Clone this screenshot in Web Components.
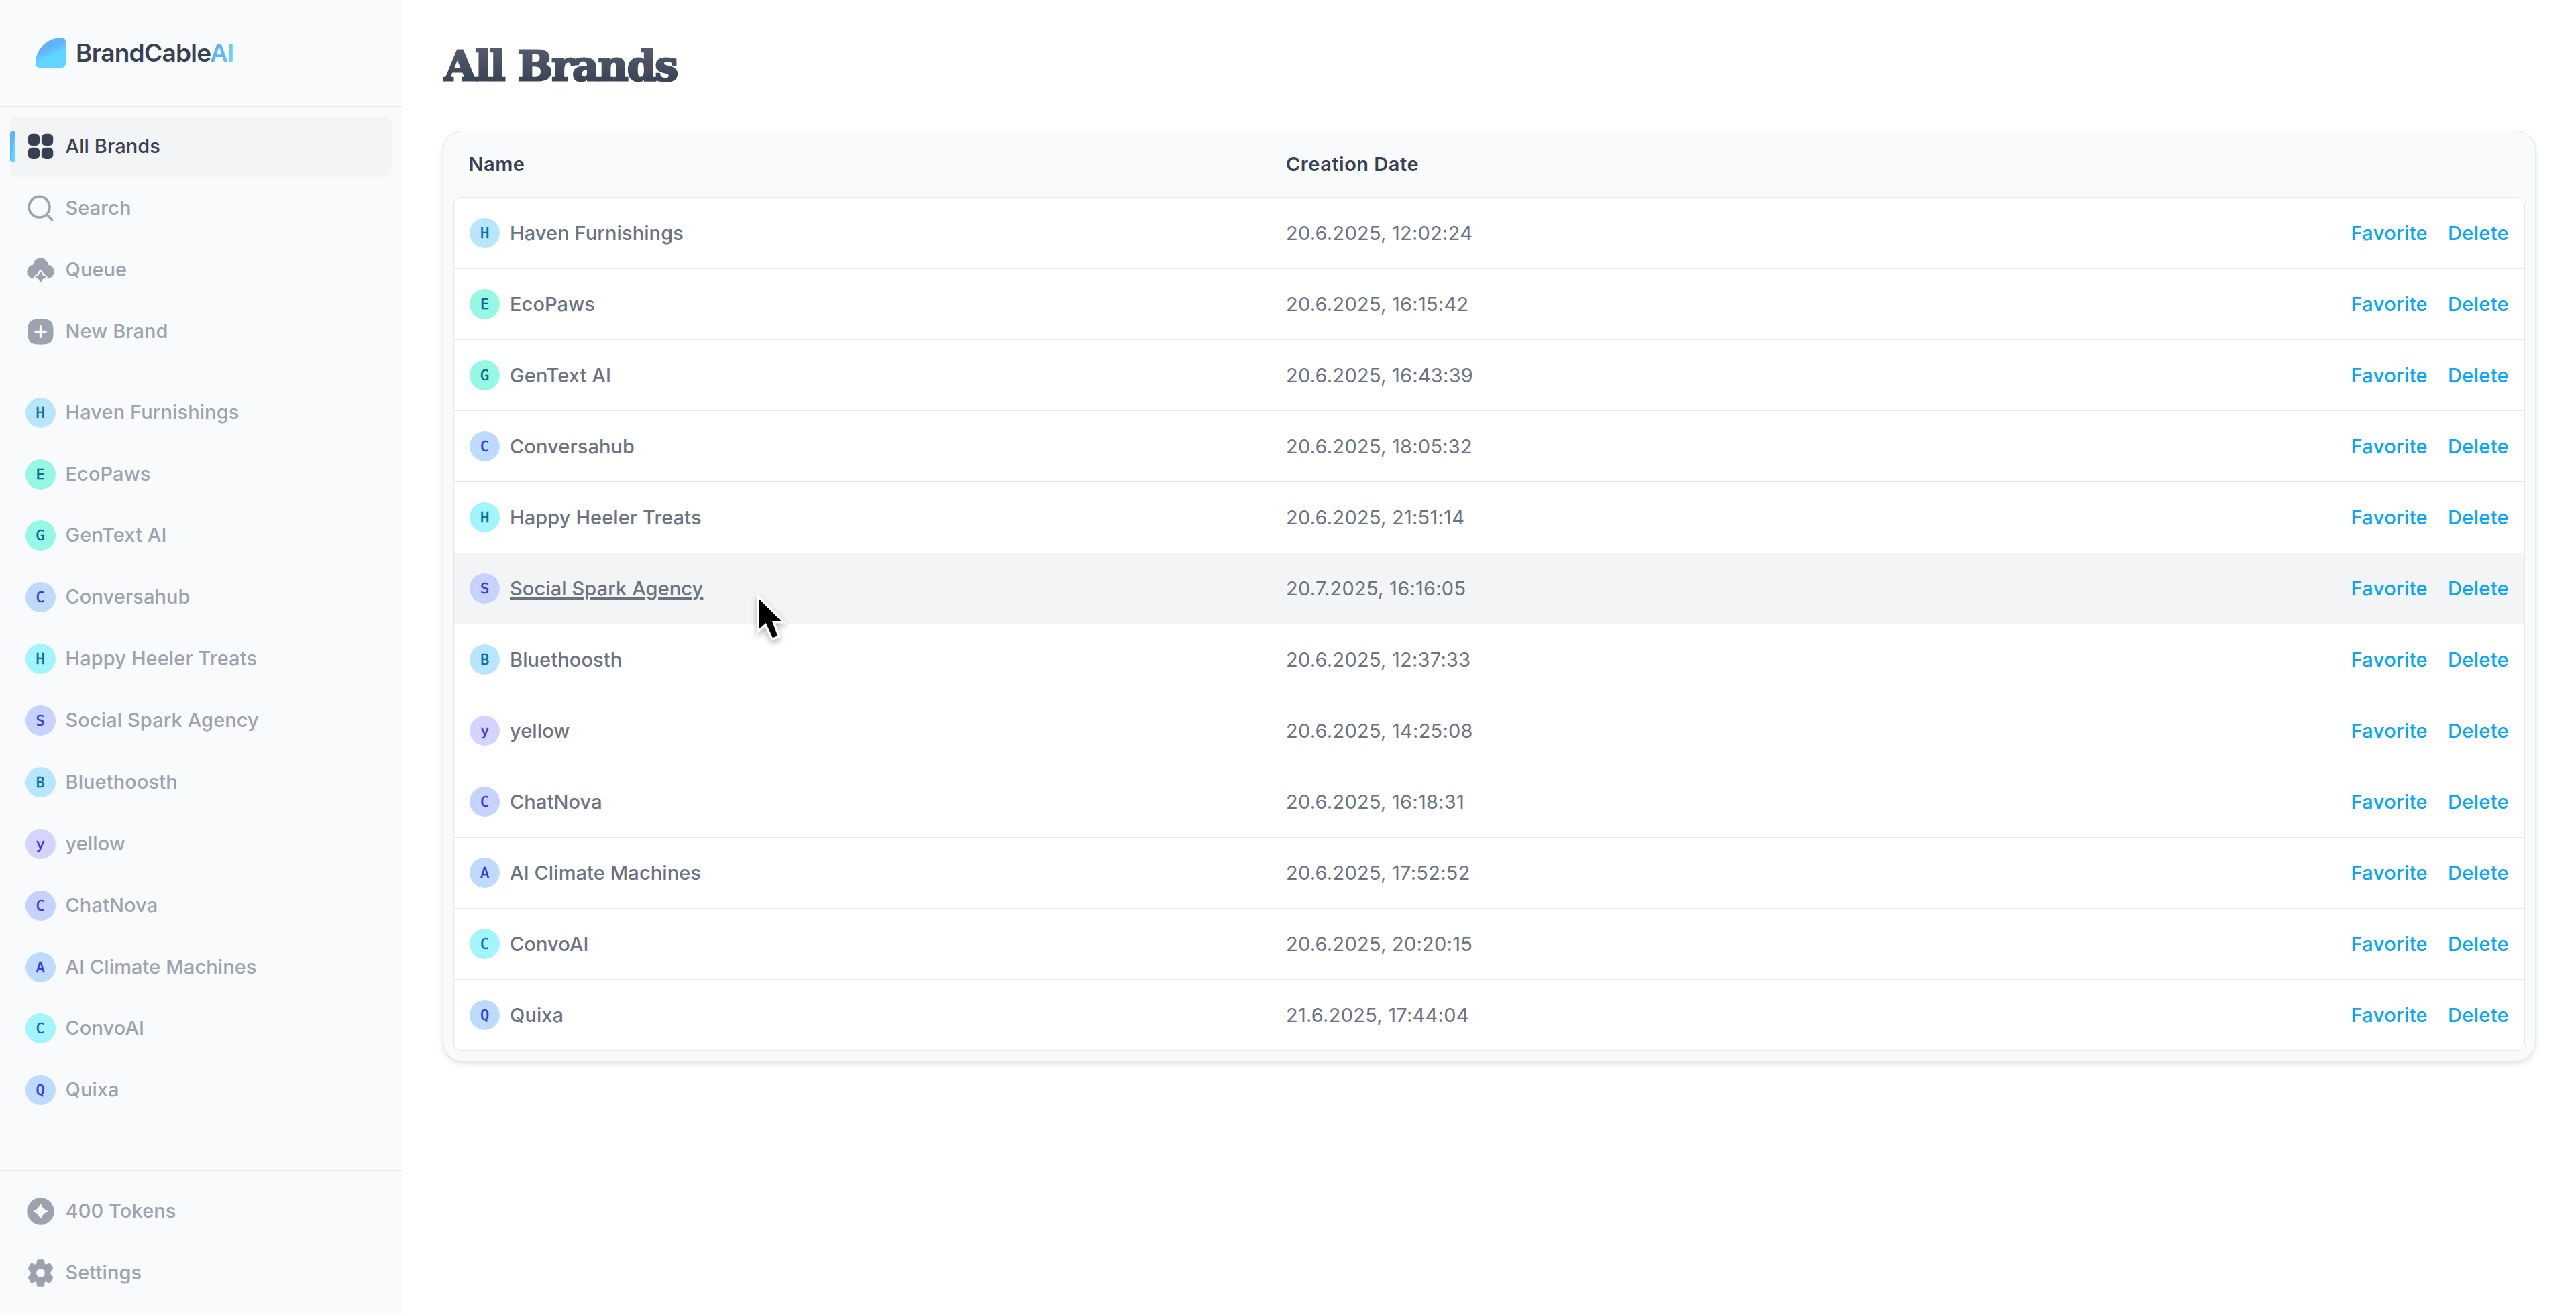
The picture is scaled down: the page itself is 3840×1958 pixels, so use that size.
<!DOCTYPE html>
<html lang="en">
<head>
  <meta charset="utf-8">
  <title>All Brands</title>
  <style>
    body {
      margin: 0;
      background: #fff;
      font-family: Inter, "Liberation Sans", sans-serif;
      font-size: 29px;
      letter-spacing: 0.1px;
      line-height: 45px;
    }
  </style>
</head>
<body>
  <brand-app></brand-app>

  <script>
    const brands = [
      { name: 'Haven Furnishings', date: '20.6.2025, 12:02:24', tone: 'sky' },
      { name: 'EcoPaws', date: '20.6.2025, 16:15:42', tone: 'teal' },
      { name: 'GenText AI', date: '20.6.2025, 16:43:39', tone: 'teal' },
      { name: 'Conversahub', date: '20.6.2025, 18:05:32', tone: 'blue' },
      { name: 'Happy Heeler Treats', date: '20.6.2025, 21:51:14', tone: 'cyan' },
      { name: 'Social Spark Agency', date: '20.7.2025, 16:16:05', tone: 'indigo', hovered: true },
      { name: 'Bluethoosth', date: '20.6.2025, 12:37:33', tone: 'sky' },
      { name: 'yellow', date: '20.6.2025, 14:25:08', tone: 'violet' },
      { name: 'ChatNova', date: '20.6.2025, 16:18:31', tone: 'indigo' },
      { name: 'AI Climate Machines', date: '20.6.2025, 17:52:52', tone: 'blue' },
      { name: 'ConvoAI', date: '20.6.2025, 20:20:15', tone: 'cyan' },
      { name: 'Quixa', date: '21.6.2025, 17:44:04', tone: 'blue' },
    ];

    const tones = {
      sky: ['#b8e6fe', '#0b6e9f'],
      teal: ['#96f7e4', '#0b6590'],
      cyan: ['#a2f4fd', '#0b6e9f'],
      blue: ['#bedbff', '#3038e0'],
      indigo: ['#c6d2ff', '#3b37dc'],
      violet: ['#d5d3ff', '#3b37dc'],
    };

    // all icons use a 24x24 box
    const icons = {
      grid: `
        <rect x="2" y="2" width="9.3" height="9.2" rx="3.2"/>
        <rect x="12.7" y="2" width="9.3" height="9.2" rx="3.2"/>
        <rect x="2" y="12.6" width="9.3" height="9.2" rx="3.2"/>
        <rect x="12.7" y="12.6" width="9.3" height="9.2" rx="3.2"/>`,
      search: `
        <g fill="none" stroke="currentColor" stroke-width="1.9" stroke-linecap="round">
          <circle cx="11" cy="11" r="8.2"/>
          <path d="M17 17l4.1 4.2"/>
        </g>`,
      queue: `
        <path d="M12 2.2A6 6 0 0 0 6.1 7.7A5.6 5.6 0 0 0 1.2 13.3A5.4 5.4 0 0 0 6.6 18.8C6.3 17.5 7 16.2 8.4 15.8C9.6 15.5 9.7 15 10.1 13.6C10.6 11.7 13.4 11.7 13.9 13.6C14.3 15 14.4 15.5 15.6 15.8C17 16.2 17.7 17.5 17.4 18.8A5.4 5.4 0 0 0 22.8 13.3A5.6 5.6 0 0 0 17.9 7.7A6 6 0 0 0 12 2.2z"/>
        <path d="M12 13.4c.4 0 .6.3.7.7.6 2 1 2.300 3 2.900.8.2.8 1.200 0 1.400-2 .6-2.400.9-3 2.900-.2.8-1.200.8-1.400 0-.6-2-1-2.300-3-2.900-.8-.2-.8-1.200 0-1.400 2-.6 2.400-.9 3-2.900.1-.4.3-.7.7-.7z"/>`,
      plus: `
        <path fill-rule="evenodd" d="M12 1.8c8.4 0 10.2 1.8 10.2 10.2S20.4 22.2 12 22.2 1.8 20.4 1.8 12 3.6 1.8 12 1.8zM11.1 7.8v3.3H7.9a.9.9 0 0 0 0 1.8h3.2v3.3a.9.9 0 0 0 1.8 0v-3.3h3.2a.9.9 0 0 0 0-1.8h-3.2V7.8a.9.9 0 0 0-1.8 0z"/>`,
      token: `
        <path fill-rule="evenodd" d="M12 1.2a10.8 10.8 0 1 0 0 21.6 10.8 10.8 0 0 0 0-21.600zM12 6.300c.3 0 .5.200.6.500 1.100 2.500 2.200 3.600 4.700 4.600.6.300.6.900 0 1.200-2.500 1-3.600 2.100-4.700 4.600-.3.600-.9.600-1.200 0-1.100-2.500-2.200-3.600-4.700-4.600-.6-.3-.6-.9 0-1.200 2.500-1 3.600-2.100 4.700-4.600.1-.3.3-.5.6-.5z"/>`,
      gear: `
        <path fill-rule="evenodd" d="M10.2 1.2h3.6c.6 0 1 .4 1.1 1l.4 2.1c.1.6.7.9 1.3.7l2-.8c.5-.2 1.1 0 1.4.5l1.8 3.1c.3.5.2 1.1-.3 1.5l-1.2 1.5c-.6.7-.6 1.7 0 2.4l1.2 1.5c.5.4.6 1 .3 1.5L20 19.3c-.3.5-.9.7-1.4.5l-2-.8c-.6-.2-1.2.1-1.3.7l-.4 2.1c-.1.6-.5 1-1.1 1h-3.6c-.6 0-1-.4-1.1-1l-.4-2.1c-.1-.6-.7-.9-1.3-.7l-2 .8c-.5.2-1.1 0-1.4-.5l-1.8-3.1c-.3-.5-.2-1.1.3-1.5l1.2-1.5c.6-.7.6-1.7 0-2.4L2.5 9.300c-.5-.4-.6-1-.3-1.5L4 4.7c.3-.5.9-.7 1.4-.5l2 .8c.6.2 1.2-.1 1.3-.7l.4-2.1c.1-.6.5-1 1.1-1zM12 8.6a3.4 3.4 0 1 0 0 6.8 3.4 3.4 0 0 0 0-6.8z"/>`,
    };

    class BrandIcon extends HTMLElement {
      constructor() {
        super();
        this.attachShadow({ mode: 'open' });
      }

      connectedCallback() {
        this.shadowRoot.innerHTML = /*html*/ `
          <style>
            :host {
              display: block;
              flex: none;
              width: 45px;
              height: 45px;
            }
            svg {
              display: block;
              width: 100%;
              height: 100%;
              fill: currentColor;
            }
          </style>
          <svg viewBox="0 0 24 24">${icons[this.getAttribute('name')]}</svg>
        `;
      }
    }

    class BrandAvatar extends HTMLElement {
      constructor() {
        super();
        this.attachShadow({ mode: 'open' });
      }

      connectedCallback() {
        const [background, color] = tones[this.getAttribute('tone')];
        this.shadowRoot.innerHTML = /*html*/ `
          <style>
            :host {
              display: flex;
              flex: none;
              align-items: center;
              justify-content: center;
              width: 45px;
              height: 45px;
              border-radius: 50%;
              background: ${background};
              color: ${color};
              font: 22px/45px "DejaVu Sans Mono", monospace;
              letter-spacing: 0;
              -webkit-text-stroke: 0.5px ${color};
            }
          </style>
          <slot></slot>
        `;
      }
    }

    class NavItem extends HTMLElement {
      constructor() {
        super();
        this.attachShadow({ mode: 'open' });
        this.shadowRoot.innerHTML = /*html*/ `
          <style>
            :host {
              display: flex;
              align-items: center;
              position: relative;
              gap: 15px;
              height: 90px;
              padding: 0 22.5px;
              box-sizing: border-box;
              border-radius: 11px;
              color: #9ca3af;
              font-weight: 500;
              white-space: nowrap;
            }
            :host([active]) {
              background: #f3f4f6;
              color: #374151;
            }
            /* marker on the left edge of the current page */
            :host([active])::before {
              content: '';
              position: absolute;
              left: 0;
              top: 22px;
              width: 8px;
              height: 45px;
              border-radius: 3px;
              background: linear-gradient(100deg, #63b1ff 45%, #60d5ff 60%);
            }
            span {
              padding-bottom: 2px;
            }
          </style>
          <slot name="icon"></slot>
          <span><slot></slot></span>
        `;
      }
    }

    class BrandLogo extends HTMLElement {
      constructor() {
        super();
        this.attachShadow({ mode: 'open' });
        this.shadowRoot.innerHTML = /*html*/ `
          <style>
            :host {
              display: flex;
              align-items: center;
              gap: 15px;
              font-size: 37px;
              font-weight: 600;
              letter-spacing: -0.75px;
              color: #374151;
            }
            .mark {
              width: 45px;
              height: 45px;
              border-radius: 38px 6px 6px 6px;
              background: linear-gradient(155deg, #63b1ff 38%, #60d5ff 58%);
            }
            .ai {
              background: linear-gradient(100deg, #63b1ff 55%, #60d5ff 80%);
              -webkit-background-clip: text;
              background-clip: text;
              color: transparent;
            }
          </style>
          <div class="mark"></div>
          <div>BrandCable<span class="ai">AI</span></div>
        `;
      }
    }

    class BrandSidebar extends HTMLElement {
      constructor() {
        super();
        this.attachShadow({ mode: 'open' });
        this.shadowRoot.innerHTML = /*html*/ `
          <style>
            :host {
              display: flex;
              flex-direction: column;
              flex: none;
              width: 600px;
              box-sizing: border-box;
              background: #f9fafc;
              border-right: 1px solid #e5e7eb;
            }
            header {
              display: flex;
              align-items: center;
              height: 157.5px;
              padding-left: 53px;
              border-bottom: 1px solid #e5e7eb;
            }
            nav {
              display: flex;
              flex-direction: column;
              gap: 1.875px;
              padding: 15px;
            }
            .brands {
              flex: 1;
              border-top: 1px solid #e5e7eb;
              border-bottom: 1px solid #e5e7eb;
            }
          </style>
          <header><brand-logo></brand-logo></header>
          <nav>
            <nav-item active><brand-icon slot="icon" name="grid"></brand-icon>All Brands</nav-item>
            <nav-item><brand-icon slot="icon" name="search"></brand-icon>Search</nav-item>
            <nav-item><brand-icon slot="icon" name="queue"></brand-icon>Queue</nav-item>
            <nav-item><brand-icon slot="icon" name="plus"></brand-icon>New Brand</nav-item>
          </nav>
          <nav class="brands">
            ${brands.map((brand) => `
              <nav-item><brand-avatar slot="icon" tone="${brand.tone}">${brand.name[0]}</brand-avatar>${brand.name}</nav-item>
            `).join('')}
          </nav>
          <nav>
            <nav-item><brand-icon slot="icon" name="token"></brand-icon>400 Tokens</nav-item>
            <nav-item><brand-icon slot="icon" name="gear"></brand-icon>Settings</nav-item>
          </nav>
        `;
      }
    }

    class BrandRow extends HTMLElement {
      constructor() {
        super();
        this.attachShadow({ mode: 'open' });
        this.shadowRoot.innerHTML = /*html*/ `
          <style>
            :host {
              display: grid;
              grid-template-columns: 1217px 1fr auto;
              align-items: center;
              height: 105px;
              padding: 0 23px;
              border-bottom: 1px solid #e5e7eb;
              color: #6b7280;
            }
            :host(:last-child) {
              border-bottom: 0;
            }
            :host([hovered]) {
              background: #f3f4f6;
            }
            .name {
              display: flex;
              align-items: center;
              gap: 15px;
              font-weight: 500;
            }
            :host([hovered]) .label {
              text-decoration: underline;
              text-decoration-thickness: 3px;
              text-underline-offset: 3px;
            }
            .date {
              letter-spacing: 0.25px;
            }
            .actions {
              display: flex;
              gap: 30px;
              color: #06a5f7;
              font-weight: 500;
              letter-spacing: 0.35px;
            }
          </style>
          <div class="name"><slot name="avatar"></slot><span class="label"><slot></slot></span></div>
          <div class="date"><slot name="date"></slot></div>
          <div class="actions"><span>Favorite</span><span>Delete</span></div>
        `;
      }
    }

    class BrandTable extends HTMLElement {
      constructor() {
        super();
        this.attachShadow({ mode: 'open' });
        this.shadowRoot.innerHTML = /*html*/ `
          <style>
            :host {
              display: block;
              padding: 0 15px 15px;
              border: 1px solid #e5e7eb;
              border-radius: 30px;
              background: #f9fafc;
              box-shadow: 0 4px 12px -2px rgba(0, 0, 0, 0.12), 0 2px 6px -2px rgba(0, 0, 0, 0.06);
            }
            .head {
              display: grid;
              grid-template-columns: 1218.5px 1fr;
              align-items: center;
              height: 98px;
              padding: 0 22.5px 2px;
              box-sizing: border-box;
              color: #374151;
              font-weight: 600;
              letter-spacing: 0.5px;
            }
            .rows {
              overflow: hidden;
              border: 1px solid #e5e7eb;
              border-radius: 11px;
              background: #fff;
            }
          </style>
          <div class="head"><span>Name</span><span>Creation Date</span></div>
          <div class="rows">
            ${brands.map((brand) => `
              <brand-row ${brand.hovered ? 'hovered' : ''}>
                <brand-avatar slot="avatar" tone="${brand.tone}">${brand.name[0]}</brand-avatar>${brand.name}<span slot="date">${brand.date}</span>
              </brand-row>
            `).join('')}
          </div>
        `;
      }
    }

    class MouseCursor extends HTMLElement {
      constructor() {
        super();
        this.attachShadow({ mode: 'open' });
        this.shadowRoot.innerHTML = /*html*/ `
          <style>
            :host {
              display: block;
              position: absolute;
              left: 1128px;
              top: 884px;
              pointer-events: none;
            }
            svg {
              display: block;
              overflow: visible;
              filter: drop-shadow(0 4px 5px rgba(0, 0, 0, 0.3));
            }
          </style>
          <svg width="48" height="76" viewBox="0 0 48 76">
            <path d="M3.8 9.3L36.5 42H23L31.2 64.3L23.8 67.3L13.8 45L3.8 53.7z" stroke="#fff" stroke-width="7" stroke-miterlimit="6" paint-order="stroke"/>
          </svg>
        `;
      }
    }

    class BrandApp extends HTMLElement {
      constructor() {
        super();
        this.attachShadow({ mode: 'open' });
        this.shadowRoot.innerHTML = /*html*/ `
          <style>
            :host {
              display: flex;
              position: relative;
              height: 1958px;
            }
            main {
              flex: 1;
              padding: 60px 60px 0;
            }
            h1 {
              width: max-content;
              height: 75px;
              margin: 0 0 60px;
              padding: 0 3px 0 2px;
              font: bold 62px/77px "DejaVu Serif", serif;
              letter-spacing: -1.8px;
              background: linear-gradient(#5b6072, #374151 90%);
              -webkit-background-clip: text;
              background-clip: text;
              color: transparent;
              -webkit-text-stroke: 3px transparent;
            }
          </style>
          <brand-sidebar></brand-sidebar>
          <main>
            <h1>All Brands</h1>
            <brand-table></brand-table>
          </main>
          <mouse-cursor></mouse-cursor>
        `;
      }
    }

    customElements.define('brand-icon', BrandIcon);
    customElements.define('brand-avatar', BrandAvatar);
    customElements.define('nav-item', NavItem);
    customElements.define('brand-logo', BrandLogo);
    customElements.define('brand-sidebar', BrandSidebar);
    customElements.define('brand-row', BrandRow);
    customElements.define('brand-table', BrandTable);
    customElements.define('mouse-cursor', MouseCursor);
    customElements.define('brand-app', BrandApp);
  </script>
</body>
</html>
